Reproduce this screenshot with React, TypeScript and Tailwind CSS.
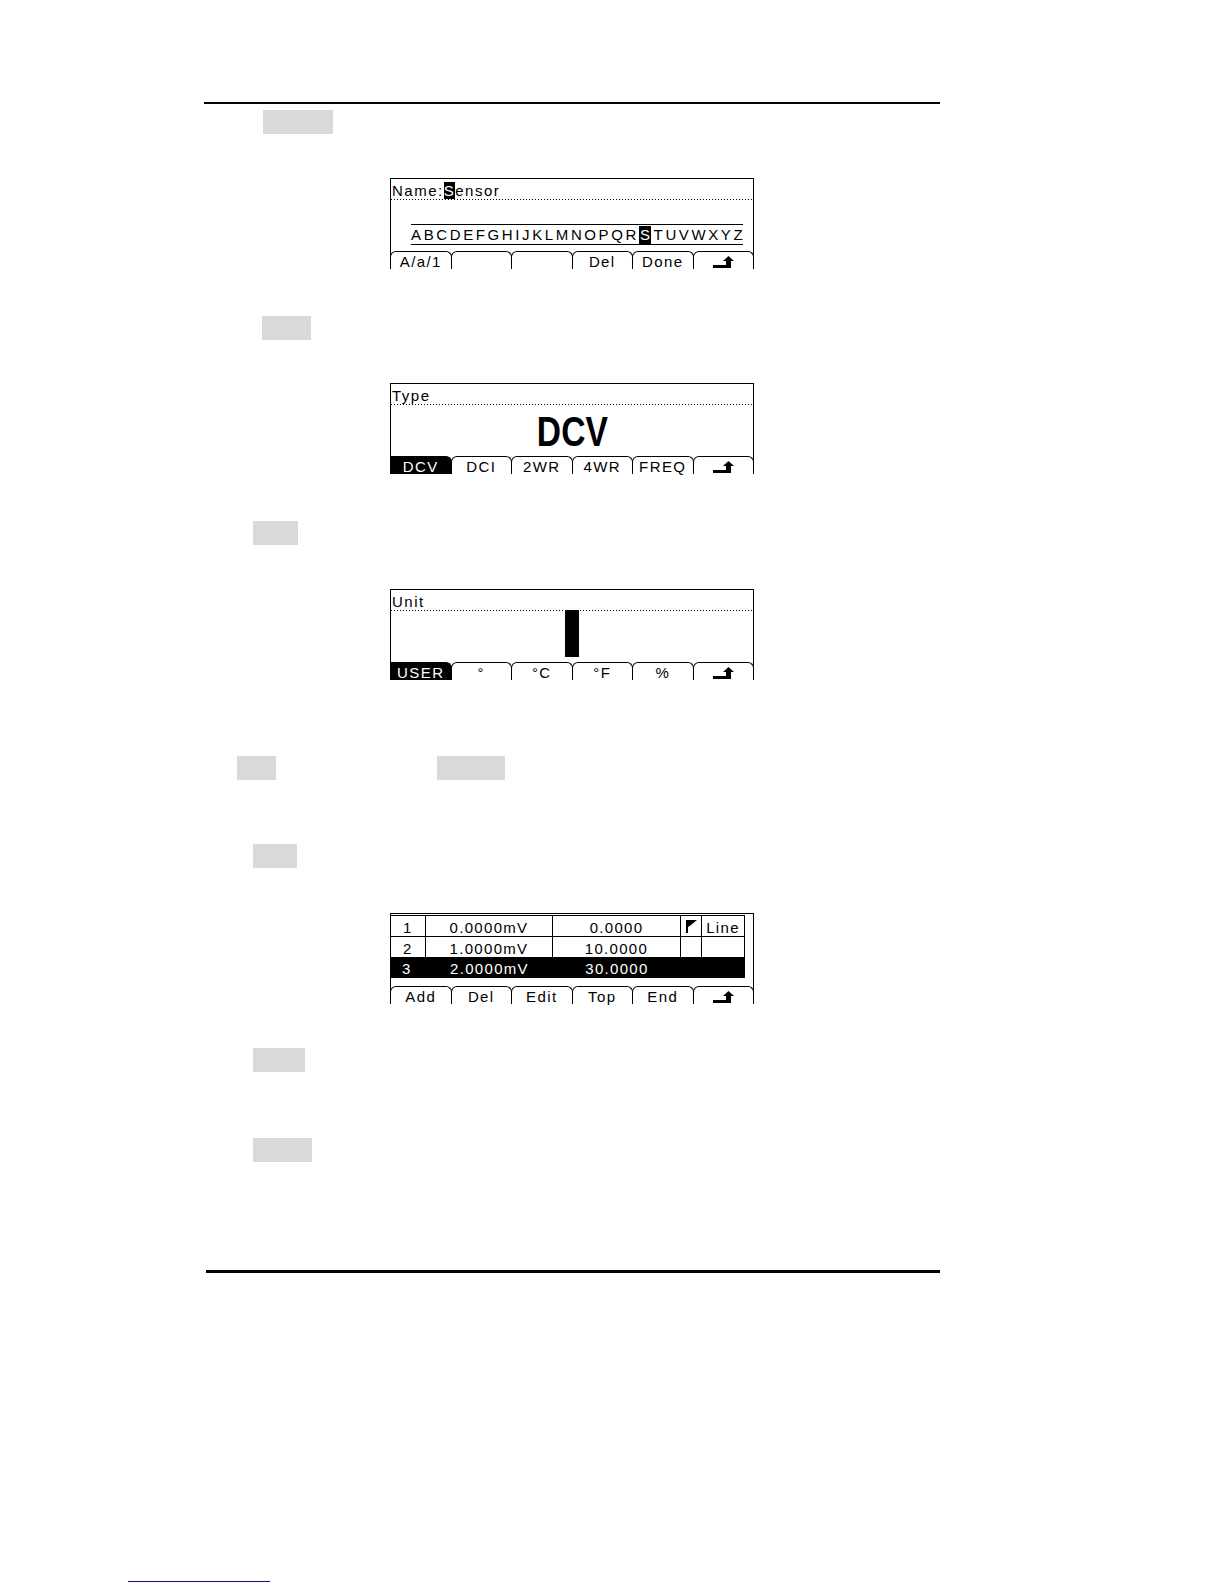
const lcdFont = { fontFamily: '"Liberation Sans", Arial, sans-serif' };

const alphabet = "ABCDEFGHIJKLMNOPQRSTUVWXYZ".split("");

function ReturnIcon() {
  return (
    <svg width="21" height="12" viewBox="0 0 21 12" className="block">
      <path d="M0 9 H13 V5 H10 L15.5 0 L21 5 H18 V12 H0 Z" fill="#000" />
    </svg>
  );
}

type Key = { label?: string; active?: boolean; back?: boolean };

function SoftKeys({ keys }: { keys: Key[] }) {
  return (
    <div className="-mx-px -mb-px flex h-[18px] shrink-0">
      {keys.map((key, index) => (
        <div
          key={index}
          className={`-ml-px flex flex-1 items-center justify-center rounded-t-[6px] border-x border-t border-black pt-[2px] text-[15px] leading-none tracking-[1.4px] first:ml-0 ${
            key.active ? "rounded-tl-none bg-black text-white" : "bg-white text-black"
          }`}
        >
          {key.back ? <ReturnIcon /> : key.label}
        </div>
      ))}
    </div>
  );
}

function Dotted() {
  return <div className="h-px w-full shrink-0 bg-[repeating-linear-gradient(to_right,#000_0_1px,transparent_1px_3px)]" />;
}

function Screen({ children }: { children: React.ReactNode }) {
  return (
    <div className="ml-[390px] flex h-[91px] w-[364px] shrink-0 flex-col border border-black bg-white text-black" style={lcdFont}>
      {children}
    </div>
  );
}

function Header({ children }: { children: React.ReactNode }) {
  return <div className="flex h-[20px] shrink-0 items-end pl-[1px] text-[15px] leading-[17px] tracking-[1.5px]">{children}</div>;
}

function Block({ className }: { className: string }) {
  return <div className={`h-[24px] shrink-0 bg-[#d9d9d9] ${className}`} />;
}

const tableRows = [
  { n: "1", a: "0.0000mV", b: "0.0000", flag: true, mode: "Line" },
  { n: "2", a: "1.0000mV", b: "10.0000", flag: false, mode: "" },
];

export default function App() {
  return (
    <div className="flex min-h-[1584px] w-[1224px] flex-col bg-white pt-[102px]">
      <div className="ml-[204px] h-[2px] w-[736px] shrink-0 bg-black" />
      <Block className="ml-[263px] mt-[6px] w-[70px]" />

      <div className="mt-[44px]">
        <Screen>
          <Header>
            <span>Name:</span>
            <span className="bg-black text-white">S</span>
            <span>ensor</span>
          </Header>
          <Dotted />
          <div className="flex flex-1 flex-col justify-end pb-[6px]">
            <div className="ml-[20px] flex h-[21px] w-[332px] items-end justify-between border-y border-black text-[15px] leading-[18px]">
              {alphabet.map((ch) => (
                <span key={ch} className={ch === "S" ? "bg-black px-px text-white" : ""}>
                  {ch}
                </span>
              ))}
            </div>
          </div>
          <SoftKeys keys={[{ label: "A/a/1" }, {}, {}, { label: "Del" }, { label: "Done" }, { back: true }]} />
        </Screen>
      </div>

      <Block className="ml-[262px] mt-[47px] w-[49px]" />

      <div className="mt-[43px]">
        <Screen>
          <Header>Type</Header>
          <Dotted />
          <div className="flex flex-1 items-center justify-center pt-[2px]">
            <span className="inline-block scale-x-[0.8] text-[42px] font-bold leading-none">DCV</span>
          </div>
          <SoftKeys
            keys={[
              { label: "DCV", active: true },
              { label: "DCI" },
              { label: "2WR" },
              { label: "4WR" },
              { label: "FREQ" },
              { back: true },
            ]}
          />
        </Screen>
      </div>

      <Block className="ml-[253px] mt-[47px] w-[45px]" />

      <div className="mt-[44px]">
        <Screen>
          <Header>Unit</Header>
          <Dotted />
          <div className="flex flex-1 justify-center">
            <div className="-mt-px h-[47px] w-[14px] bg-black" />
          </div>
          <SoftKeys
            keys={[
              { label: "USER", active: true },
              { label: "°" },
              { label: "°C" },
              { label: "°F" },
              { label: "%" },
              { back: true },
            ]}
          />
        </Screen>
      </div>

      <div className="mt-[76px] flex shrink-0">
        <Block className="ml-[237px] w-[39px]" />
        <Block className="ml-[161px] w-[68px]" />
      </div>

      <Block className="ml-[253px] mt-[64px] w-[44px]" />

      <div className="mt-[45px]">
        <Screen>
          <div className="flex flex-1 flex-col pt-px">
            <div className="-ml-px w-[355px] text-[15px] leading-none tracking-[1.3px]">
              {tableRows.map((row) => (
                <div key={row.n} className="flex h-[21px] border-t border-black">
                  <div className="flex w-[36px] items-center border-x border-black pl-[12px] pt-[2px]">{row.n}</div>
                  <div className="flex w-[127px] items-center justify-center border-r border-black pt-[2px]">{row.a}</div>
                  <div className="flex w-[128px] items-center justify-center border-r border-black pt-[2px]">{row.b}</div>
                  <div className="flex w-[21px] items-center justify-center border-r border-black">
                    {row.flag && (
                      <svg width="11" height="13" viewBox="0 0 11 13" className="block">
                        <path d="M0 0 H11 L5 5 L2 7 V13 H0 Z" fill="#000" />
                      </svg>
                    )}
                  </div>
                  <div className="flex w-[43px] items-center justify-center border-r border-black pt-[2px]">{row.mode}</div>
                </div>
              ))}
              <div className="flex h-[21px] border border-black bg-black text-white">
                <div className="flex w-[35px] items-center pl-[11px] pt-[2px]">3</div>
                <div className="flex w-[127px] items-center justify-center pt-[2px]">2.0000mV</div>
                <div className="flex w-[128px] items-center justify-center pt-[2px]">30.0000</div>
              </div>
            </div>
          </div>
          <SoftKeys
            keys={[
              { label: "Add" },
              { label: "Del" },
              { label: "Edit" },
              { label: "Top" },
              { label: "End" },
              { back: true },
            ]}
          />
        </Screen>
      </div>

      <Block className="ml-[253px] mt-[44px] w-[52px]" />
      <Block className="ml-[253px] mt-[66px] w-[59px]" />

      <div className="ml-[206px] mt-[108px] h-[3px] w-[734px] shrink-0 bg-black" />

      <div className="ml-[128px] mt-[308px] h-px w-[142px] shrink-0 bg-[#10108a]" />
    </div>
  );
}
